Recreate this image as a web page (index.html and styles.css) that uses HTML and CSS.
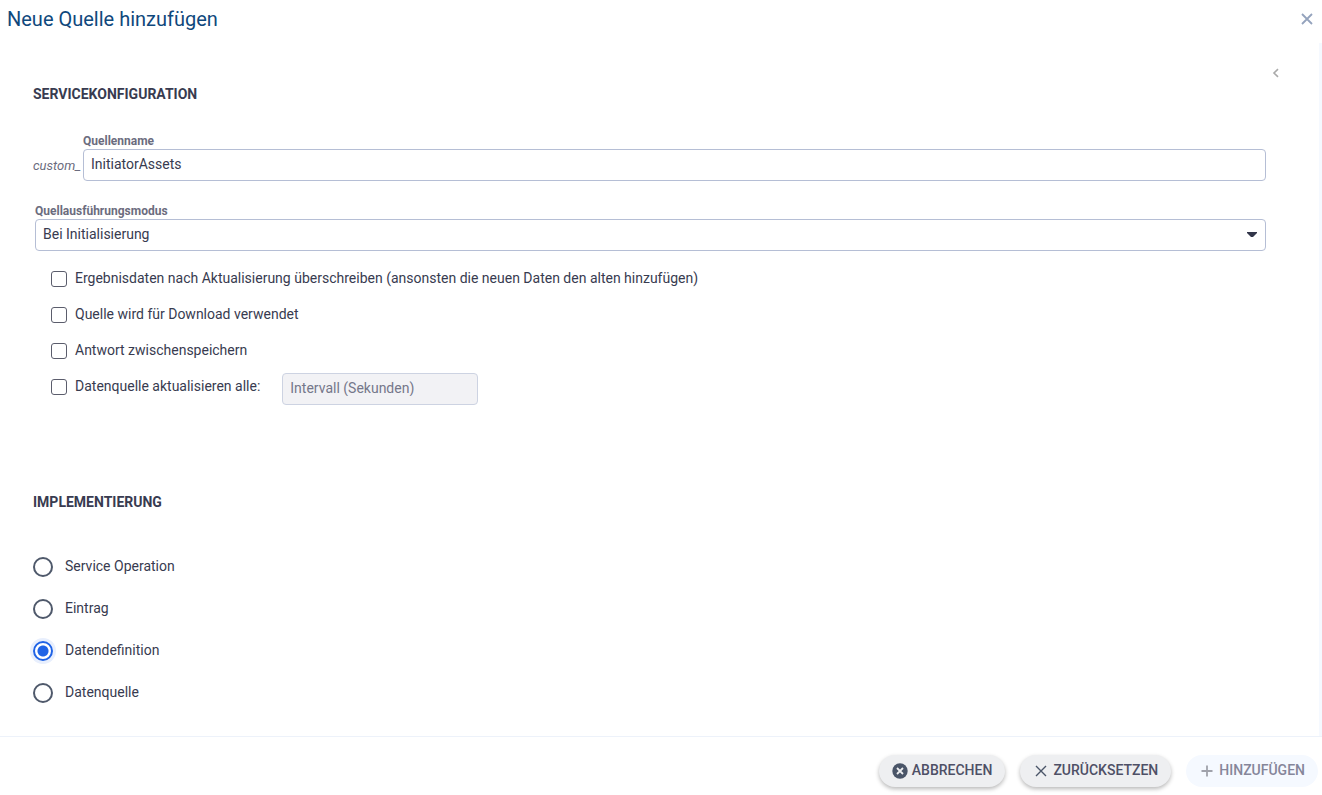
FILE: index.html
```html
<!DOCTYPE html>
<html lang="de">
<head>
  <meta charset="utf-8">
  <meta name="viewport" content="width=device-width, initial-scale=1">
  <title>Neue Quelle hinzufügen</title>
  <link rel="stylesheet" href="styles.css">
</head>
<body>
  <form class="dialog">
    <header class="dialog-header">
      <h1 class="dialog-title">Neue Quelle hinzufügen</h1>
      <button class="icon-button" type="button" aria-label="Schließen">
        <svg class="icon-close" viewBox="0 0 12 12" width="12" height="12" aria-hidden="true"><path d="M1 1 11 11M11 1 1 11"/></svg>
      </button>
    </header>

    <main class="dialog-body">
      <div class="toolbar">
        <button class="icon-button" type="button" aria-label="Einklappen">
          <svg class="icon-collapse" viewBox="0 0 8 10" width="8" height="10" aria-hidden="true"><path d="M6 1.200 2 5l4 3.800"/></svg>
        </button>
      </div>

      <section class="section">
        <h2 class="section-title">Servicekonfiguration</h2>
        <div class="name-row">
          <span class="prefix">custom_</span>
          <div class="field">
            <label class="field-label" for="source-name">Quellenname</label>
            <input class="control" id="source-name" type="text" value="InitiatorAssets">
          </div>
        </div>
        <div class="field field-mode">
          <label class="field-label" for="source-mode">Quellausführungsmodus</label>
          <select class="control control-select" id="source-mode">
            <option>Bei Initialisierung</option>
          </select>
        </div>
        <div class="checks">
          <label class="check"><input class="checkbox" type="checkbox"><span class="option-text">Ergebnisdaten nach Aktualisierung überschreiben (ansonsten die neuen Daten den alten hinzufügen)</span></label>
          <label class="check"><input class="checkbox" type="checkbox"><span class="option-text">Quelle wird für Download verwendet</span></label>
          <label class="check"><input class="checkbox" type="checkbox"><span class="option-text">Antwort zwischenspeichern</span></label>
          <div class="interval-row">
            <label class="check"><input class="checkbox" type="checkbox"><span class="option-text">Datenquelle aktualisieren alle:</span></label>
            <input class="control control-interval" type="text" placeholder="Intervall (Sekunden)" aria-label="Intervall (Sekunden)" disabled>
          </div>
        </div>
      </section>

      <section class="section section-implementation">
        <h2 class="section-title">Implementierung</h2>
        <div class="radios">
          <label class="choice"><input class="radio" type="radio" name="implementation"><span class="option-text">Service Operation</span></label>
          <label class="choice"><input class="radio" type="radio" name="implementation"><span class="option-text">Eintrag</span></label>
          <label class="choice"><input class="radio" type="radio" name="implementation" checked><span class="option-text">Datendefinition</span></label>
          <label class="choice"><input class="radio" type="radio" name="implementation"><span class="option-text">Datenquelle</span></label>
        </div>
      </section>
    </main>

    <footer class="dialog-footer">
      <button class="button" type="button">
        <svg viewBox="0 0 16 16" width="16" height="16" aria-hidden="true"><circle cx="8" cy="8" r="7.700" fill="#4a5568"/><path d="M5 5l6 6M11 5l-6 6" stroke="#eeeff1" stroke-width="1.800"/></svg>
        <span class="button-text">Abbrechen</span>
      </button>
      <button class="button" type="reset">
        <svg viewBox="0 0 16 16" width="16" height="16" aria-hidden="true"><path d="M3 3l10 10M13 3 3 13" stroke="#4a5568" stroke-width="1.400"/></svg>
        <span class="button-text">Zurücksetzen</span>
      </button>
      <button class="button button-submit" type="submit" disabled>
        <svg viewBox="0 0 16 16" width="16" height="16" aria-hidden="true"><path d="M8 2.500v11M2.500 8h11" stroke="#a0a2ab" stroke-width="1.800"/></svg>
        <span class="button-text">Hinzufügen</span>
      </button>
    </footer>
  </form>
</body>
</html>
```
FILE: styles.css
```css
* {
  box-sizing: border-box;
}

body {
  margin: 0;
  background: #fff;
  color: #383b50;
  font-family: Roboto, "Liberation Sans", sans-serif;
  font-size: 14px;
  line-height: 20px;
}

.dialog {
  display: flex;
  flex-direction: column;
  min-height: 100vh;
}

.dialog-header {
  display: flex;
  align-items: center;
  justify-content: space-between;
  padding: 7px 5px 12px 7px;
}

.dialog-title {
  margin: 0;
  color: #0f487c;
  font-size: 20px;
  font-weight: 400;
  line-height: 24px;
}

.icon-button {
  display: flex;
  align-items: center;
  justify-content: center;
  width: 20px;
  height: 20px;
  padding: 0;
  border: 0;
  background: none;
  fill: none;
}

.icon-close {
  stroke: #94a3bd;
  stroke-width: 1.8;
}

.icon-collapse {
  stroke: #aaa;
  stroke-width: 1.6;
}

.dialog-body {
  flex: 1;
  padding: 20px 33px;
  border-right: 3px solid #f5f9ff;
}

.toolbar {
  display: flex;
  justify-content: flex-end;
}

.section {
  padding-right: 20px;
}

.section-implementation {
  margin-top: 86px;
}

.section-title {
  margin: 0;
  font-size: 14px;
  font-weight: 700;
  line-height: 22px;
  text-transform: uppercase;
}

.name-row {
  display: flex;
  align-items: flex-end;
  gap: 2px;
  margin-top: 28px;
}

.prefix {
  padding-bottom: 5px;
  color: #6b6c7e;
  font-size: 13px;
  font-style: italic;
}

.field {
  display: flex;
  flex: 1;
  flex-direction: column;
}

.field-mode {
  margin: 22px 0 0 2px;
}

.field-label {
  align-self: flex-start;
  color: #6b6c7e;
  font-size: 12px;
  font-weight: 700;
  line-height: 16px;
}

.control {
  width: 100%;
  height: 32px;
  padding: 0 7px 2px;
  border: 1px solid #b5bed5;
  border-radius: 4px;
  background: #fff;
  color: #383b50;
  font: inherit;
}

.control-select {
  appearance: none;
  background: url("data:image/svg+xml,%3Csvg xmlns='http://www.w3.org/2000/svg' width='10' height='6'%3E%3Cpath d='M0 0h10v1L6 5H4L0 1z' fill='%2332364a'/%3E%3C/svg%3E") no-repeat right 8px center;
}

.control-interval {
  width: 196px;
  border-color: #cdd3e2;
  background: #f2f2f5;
}

.control-interval::placeholder {
  color: #75778a;
}

.checks {
  margin-top: 10px;
  padding-left: 18px;
}

.check,
.choice {
  display: flex;
  align-items: center;
  width: fit-content;
}

.check {
  gap: 8px;
  height: 36px;
}

.choice {
  gap: 12px;
  height: 42px;
}

.option-text,
.button-text {
  padding-bottom: 2px;
}

.interval-row {
  display: flex;
  align-items: flex-end;
  gap: 22px;
}

.checkbox,
.radio {
  flex: none;
  margin: 0;
  appearance: none;
  background: #fff;
}

.checkbox {
  width: 16px;
  height: 16px;
  border: 1px solid #5b5d6c;
  border-radius: 3px;
}

.checkbox:checked {
  border-color: #1f63e6;
  background: #1f63e6;
}

.radios {
  margin-top: 33px;
}

.radio {
  width: 20px;
  height: 20px;
  border: 2px solid #4f596b;
  border-radius: 50%;
}

.radio:checked {
  border-color: #1f63e6;
  background: radial-gradient(circle, #1f63e6 5px, #fff 6px);
  box-shadow: 0 0 0 3px #e8effd;
}

.dialog-footer {
  display: flex;
  justify-content: flex-end;
  gap: 15px;
  padding: 18px 4px 8px;
  border-top: 1px solid #edf2fa;
}

.button {
  display: flex;
  align-items: center;
  gap: 4px;
  height: 32px;
  padding: 0 13px;
  border: 0;
  border-radius: 16px;
  background: #eeeff1;
  box-shadow: 0 2px 4px rgb(0 0 0 / 28%);
  color: #4e5066;
  fill: none;
  font: inherit;
  font-weight: 500;
  text-transform: uppercase;
}

.button-submit {
  background: #f5f9ff;
  box-shadow: none;
  color: #85869a;
}
```
